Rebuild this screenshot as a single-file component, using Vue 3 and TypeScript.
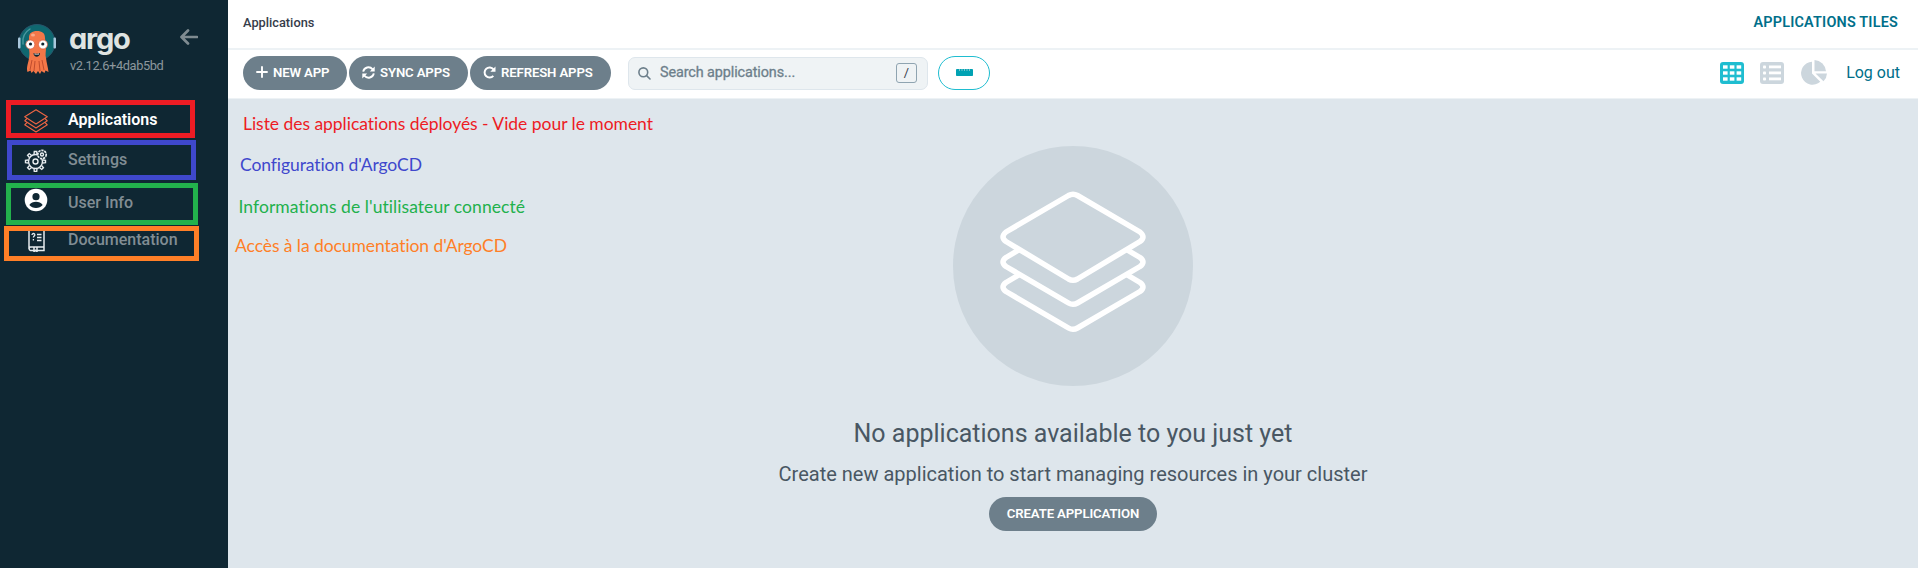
<script setup lang="ts">
interface NavItem {
  id: 'apps' | 'settings' | 'user' | 'docs'
  label: string
}
interface Frame {
  x: number
  y: number
  w: number
  h: number
  color: string
}
interface Note {
  x: number
  y: number
  len: number
  color: string
  text: string
}

const navItems: NavItem[] = [
  { id: 'apps', label: 'Applications' },
  { id: 'settings', label: 'Settings' },
  { id: 'user', label: 'User Info' },
  { id: 'docs', label: 'Documentation' },
]

const frames: Frame[] = [
  { x: 6, y: 100, w: 189, h: 38, color: '#ed1c24' },
  { x: 7, y: 140, w: 189, h: 40, color: '#3f48cc' },
  { x: 6, y: 183, w: 192, h: 42, color: '#22b14c' },
  { x: 4, y: 226, w: 195, h: 35, color: '#ff7f27' },
]

const notes: Note[] = [
  { x: 243, y: 130, len: 410, color: '#ed1c24', text: 'Liste des applications déployés - Vide pour le moment' },
  { x: 240, y: 171, len: 182, color: '#3f48cc', text: "Configuration d'ArgoCD" },
  { x: 238.5, y: 213, len: 286.5, color: '#22b14c', text: "Informations de l'utilisateur connecté" },
  { x: 235, y: 252, len: 272, color: '#ff7f27', text: "Accès à la documentation d'ArgoCD" },
]

const teeth = [0, 45, 90, 135, 180, 225, 270, 315]
</script>

<template>
  <div class="page">
    <aside class="sidebar">
      <div class="brand">
        <svg class="mascot" width="40" height="52" viewBox="0 0 40 52">
          <circle cx="20" cy="19.500" r="18" fill="#0f6870" stroke="#28556b" stroke-width="1" />
          <path d="M6 21C5 14 8 9 13 6" fill="none" stroke="#4b9aa0" stroke-width="1.4" stroke-linecap="round" />
          <rect x="1" y="14.500" width="2.500" height="11" rx="1" fill="#a9c7dc" />
          <rect x="36.500" y="14.500" width="2.500" height="11" rx="1" fill="#a9c7dc" />
          <path
            d="M12 15C12 10 15 8 20 8s8 2 8 7l1 9c0 5-1 8 0 11 .5 5 2 9 2.500 14l-3-1.500-1 2.500-3-2-1.500 3-2-3-2 3-2.500-3-2 2-1-2.500-3 1.500C9 44 11.500 40 12 35c1-5 0-7 0-11z"
            fill="#f47748"
          />
          <path d="M15 37l-2 10M18 38l-1 10M22 38l1 10M25 37l2 10" stroke="#b9472a" stroke-width=".9" />
          <ellipse cx="16" cy="12" rx="2" ry="1.500" fill="#fba988" />
          <circle cx="13.300" cy="21.500" r="4.500" fill="#fff" stroke="#d8583a" stroke-width=".7" />
          <circle cx="26" cy="21.500" r="4.500" fill="#fff" stroke="#d8583a" stroke-width=".7" />
          <circle cx="13.500" cy="21" r="1.600" fill="#10242e" />
          <circle cx="25.800" cy="21" r="1.600" fill="#10242e" />
          <path d="M16.500 30c2 1 4.500 1 6.500 0 0 5-6.500 5-6.500 0z" fill="#10242e" />
          <path d="M17.500 30.500c1.500.6 3.500.6 4.500 0v1h-4.500z" fill="#fff" />
        </svg>
        <div class="brand-text">
          <span class="wordmark">argo</span>
          <span class="version">v2.12.6+4dab5bd</span>
        </div>
        <svg class="back" width="18" height="16" viewBox="0 0 18 16">
          <path d="M8 1.500L1.500 8 8 14.500M2 8h15" fill="none" stroke="#7f8b91" stroke-width="2.700" stroke-linecap="round" stroke-linejoin="round" />
        </svg>
      </div>
      <nav class="nav">
        <a v-for="item in navItems" :key="item.id" class="nav-item" :class="item.id">
          <svg v-if="item.id === 'apps'" width="24" height="24" viewBox="0 0 24 24" fill="none" stroke="#ee6644" stroke-width="1.100" stroke-linejoin="round">
            <path d="M12 .8l11.300 7L12 15 .7 7.800z" />
            <path d="M3 9.500L.7 11.800 12 19l11.300-7.200L21 9.500" />
            <path d="M3 13.500L.7 15.800 12 23l11.300-7.200-2.300-2.300" />
          </svg>
          <svg v-else-if="item.id === 'settings'" width="24" height="24" viewBox="0 0 24 24" fill="none" stroke="#e8edf0" stroke-width="1.400">
            <circle cx="11.500" cy="13.500" r="7" />
            <circle cx="11.500" cy="13.500" r="2.500" />
            <path v-for="a in teeth" :key="a" d="M10 6.500l.3-3h2.400l.3 3" :transform="`rotate(${a} 11.500 13.500)`" />
            <circle cx="18" cy="6.500" r="4.200" fill="#0f2733" stroke-width="1.700" stroke-dasharray="2.300 .8" />
            <circle cx="18" cy="6.500" r="1.500" />
          </svg>
          <svg v-else-if="item.id === 'user'" width="24" height="24" viewBox="0 0 24 24">
            <circle cx="12" cy="12" r="11.300" fill="#fff" />
            <circle cx="12" cy="8.700" r="3.600" fill="#0f2733" />
            <path d="M5.300 17c1.500-2.300 4-3.300 6.700-3.300s5.200 1 6.700 3.300c-1.700 2-4 3-6.700 3s-5-1-6.700-3z" fill="#0f2733" />
          </svg>
          <svg v-else width="24" height="24" viewBox="0 0 24 24" fill="none" stroke="#e8edf0" stroke-width="1.500">
            <path d="M5 21V2h15v17H6.500a1.800 1.800 0 0 0 0 3.500H20V19" />
            <path d="M13 6.500h4.500M13 9.500h4.500M13 12.500h4.500" />
            <path d="M8 7c0-2 3-2 2.800 0-.2 1-1.400 1-1.400 2.500M9.400 11v1.500" stroke-width="1.300" />
            <path d="M10 19v4.500l1.500-1 1.500 1V19" />
          </svg>
          <span>{{ item.label }}</span>
        </a>
      </nav>
    </aside>

    <main class="main">
      <header class="topbar">
        <span class="crumb">Applications</span>
        <span class="view-title">APPLICATIONS TILES</span>
      </header>

      <section class="toolbar">
        <button class="btn new">
          <svg width="12" height="12" viewBox="0 0 12 12"><path d="M6 1v10M1 6h10" stroke="#fff" stroke-width="1.900" stroke-linecap="round" /></svg>
          <span>NEW APP</span>
        </button>
        <button class="btn sync">
          <svg width="13" height="13" viewBox="0 0 13 13" fill="none" stroke="#fff" stroke-width="1.900">
            <path d="M1.200 5.700C2 1.200 7.500-.2 10.700 3.300M11.800 7.300C11 11.800 5.500 13.200 2.300 9.700" />
            <path d="M12.700.6v4.900H7.800zM.3 12.400V7.500h4.900z" fill="#fff" stroke="none" />
          </svg>
          <span>SYNC APPS</span>
        </button>
        <button class="btn refresh">
          <svg width="13" height="13" viewBox="0 0 13 13" fill="none" stroke="#fff" stroke-width="2">
            <path d="M10.500 3.400A5 5 0 1 0 10.300 9.900" />
            <path d="M12.500.5v5.200H7.300z" fill="#fff" stroke="none" />
          </svg>
          <span>REFRESH APPS</span>
        </button>
        <div class="search">
          <svg width="13" height="13" viewBox="0 0 13 13" fill="none" stroke="#6d7f8b" stroke-width="1.600" stroke-linecap="round">
            <circle cx="5.300" cy="5.300" r="4.400" />
            <path d="M8.600 8.600L12 12" />
          </svg>
          <span class="placeholder">Search applications...</span>
          <kbd class="key">/</kbd>
        </div>
        <div class="health">
          <svg width="17" height="7" viewBox="0 0 17 7">
            <rect width="17" height="7" rx=".8" fill="#00a2b3" />
            <path d="M3.500 0v2M6 0v2M8.500 0v2M11 0v2M13.500 0v2" stroke="#7cc6cd" stroke-width="1" />
          </svg>
        </div>
        <div class="views">
          <svg width="24" height="22" viewBox="0 0 24 22">
            <rect width="24" height="22" rx="3" fill="#1fbdd0" />
            <g fill="#fff">
              <template v-for="r in 3" :key="r">
                <rect v-for="c in 3" :key="c" :x="3 + (c - 1) * 6.8" :y="3.300 + (r - 1) * 6" width="4.600" height="3.400" />
              </template>
            </g>
          </svg>
          <svg width="24" height="22" viewBox="0 0 24 22">
            <rect width="24" height="22" rx="3" fill="#ccd6dd" />
            <g fill="#fff">
              <template v-for="r in 3" :key="r">
                <rect x="3" :y="3.500 + (r - 1) * 6" width="3" height="3" rx=".8" />
                <rect x="9" :y="3.500 + (r - 1) * 6" width="12" height="2.800" />
              </template>
            </g>
          </svg>
          <svg class="pie" width="26" height="25" viewBox="0 0 26 25" fill="#ccd6dd">
            <path d="M11 1.700V13.500l8.300 8.200A11.500 11.500 0 1 1 11 1.700z" />
            <path d="M13.500 0A12 12 0 0 1 25 11.200H13.500z" />
            <path d="M14.500 13.500H26a12 12 0 0 1-3.500 7.800z" />
          </svg>
          <a class="logout">Log out</a>
        </div>
      </section>

      <section class="empty">
        <svg class="empty-icon" width="240" height="240" viewBox="0 0 240 240">
          <circle cx="120" cy="120" r="120" fill="#ccd6dd" />
          <g fill="none" stroke="#fff" stroke-width="5.500" stroke-linejoin="round">
            <path d="M115.500 49.500Q120 47 124.500 49.500L187 86Q193 91 187 95.500L124.500 133Q120 135.500 115.500 133L53 95.500Q47 91 53 86Z" />
            <path d="M66.500 103.500L53 111.500Q47 116 53 120.500L115.500 157Q120 159.500 124.500 157L187 120.500Q193 116 187 111.500L173.500 103.500" />
            <path d="M66.500 128.500L53 136.500Q47 141 53 145.500L115.500 182Q120 184.500 124.500 182L187 145.500Q193 141 187 136.500L173.500 128.500" />
          </g>
        </svg>
        <h4 class="empty-title">No applications available to you just yet</h4>
        <h5 class="empty-sub">Create new application to start managing resources in your cluster</h5>
        <button class="btn create"><span>CREATE APPLICATION</span></button>
      </section>
    </main>

    <svg class="annotations" width="1918" height="568" viewBox="0 0 1918 568">
      <rect
        v-for="f in frames"
        :key="f.color"
        :x="f.x + 2.5"
        :y="f.y + 2.5"
        :width="f.w - 5"
        :height="f.h - 5"
        :stroke="f.color"
        fill="none"
        stroke-width="5"
      />
      <text v-for="n in notes" :key="n.text" :x="n.x" :y="n.y" :fill="n.color" :textLength="n.len">{{ n.text }}</text>
    </svg>
  </div>
</template>

<style>
html,
body {
  margin: 0;
  overflow: hidden;
}
</style>

<style scoped>
.page {
  position: relative;
  display: flex;
  width: 1918px;
  height: 568px;
  font-family: Roboto, 'Liberation Sans', sans-serif;
  background: #dee6ec;
}
.sidebar {
  width: 228px;
  flex: none;
  background: #0f2733;
}
.brand {
  display: flex;
  height: 98px;
  box-sizing: border-box;
  padding: 23px 0 0 17px;
}
.brand-text {
  display: flex;
  flex-direction: column;
  width: 110px;
  margin-left: 13px;
}
.wordmark {
  margin: -4px 0 -1px -1px;
  font: 700 29px/40px Inter, Roboto, sans-serif;
  font-feature-settings: 'cv11' 1;
  letter-spacing: -1.2px;
  color: #dfe4e2;
}
.version {
  font-size: 12.8px;
  letter-spacing: -0.38px;
  line-height: 15px;
  color: #8c979d;
}
.back {
  margin-top: 6px;
}
.nav {
  display: flex;
  flex-direction: column;
}
.nav-item {
  display: flex;
  align-items: center;
  gap: 20px;
  padding-left: 24px;
  height: 42px;
  font-size: 16px;
  font-weight: 500;
  color: #818d94;
}
.nav-item.apps {
  color: #fff;
  font-weight: 600;
}
.nav-item.apps svg {
  margin-top: 3px;
}
.nav-item.settings {
  height: 40px;
}
.nav-item.settings span,
.nav-item.docs span {
  margin-top: -2px;
}
.nav-item.user {
  height: 44px;
}
.nav-item.user svg {
  margin-top: -5px;
}
.nav-item.docs {
  height: 32px;
}
.main {
  display: flex;
  flex-direction: column;
  flex: 1;
}
.topbar {
  display: flex;
  justify-content: space-between;
  box-sizing: border-box;
  height: 50px;
  padding: 14px 20px 0 15px;
  background: #fff;
  border-bottom: 2px solid #edf2f5;
}
.crumb {
  font-size: 12.8px;
  font-weight: 500;
  line-height: 18px;
  color: #363c4a;
}
.view-title {
  font-size: 14.4px;
  font-weight: 600;
  letter-spacing: 0.2px;
  line-height: 18px;
  color: #006f8a;
}
.toolbar {
  display: flex;
  align-items: flex-start;
  box-sizing: border-box;
  height: 49px;
  padding: 6px 18px 0 15px;
  background: #fff;
  border-bottom: 1px solid #edf2f5;
}
.btn {
  display: flex;
  align-items: center;
  gap: 5px;
  box-sizing: border-box;
  height: 34px;
  margin: 0 2px 0 0;
  padding: 0 0 2px 13px;
  border: 0;
  border-radius: 17px;
  background: #6d7f8b;
  color: #fff;
  font-family: inherit;
  font-size: 13.2px;
  font-weight: 600;
  letter-spacing: -0.14px;
  white-space: nowrap;
}
.new {
  width: 104px;
}
.sync {
  width: 119px;
}
.refresh {
  width: 141px;
}
.search {
  display: flex;
  align-items: center;
  box-sizing: border-box;
  width: 300px;
  height: 33px;
  margin: 1px 10px 0 15px;
  padding: 0 10px 1px 9px;
  border: 1px solid #dee6ec;
  border-radius: 7px;
  background: #eff3f5;
}
.placeholder {
  flex: 1;
  margin: -1px 0 0 9px;
  font-size: 14.4px;
  letter-spacing: -0.1px;
  color: #6d7f8b;
  -webkit-text-stroke: 0.3px #6d7f8b;
}
.key {
  box-sizing: border-box;
  width: 21px;
  height: 20px;
  border: 1px solid #8fa4b1;
  border-radius: 3px;
  font: 12.8px/18px Roboto, sans-serif;
  text-align: center;
  color: #363c4a;
}
.health {
  display: flex;
  align-items: center;
  justify-content: center;
  box-sizing: border-box;
  width: 52px;
  height: 34px;
  border: 1px solid #1fbdd0;
  border-radius: 17px;
}
.health svg {
  margin-top: -2px;
}
.views {
  display: flex;
  align-items: center;
  gap: 16px;
  height: 34px;
  margin-left: auto;
}
.pie {
  margin: -1px -1px 0 1px;
}
.logout {
  margin: -2px 0 0 4px;
  font-size: 16px;
  color: #006f8a;
}
.empty {
  display: flex;
  flex-direction: column;
  align-items: center;
  padding-top: 47px;
}
.empty-icon {
  flex: none;
}
.empty-title {
  margin: 33px 0 0;
  font-size: 25px;
  font-weight: 400;
  line-height: 30px;
  color: #495763;
}
.empty-sub {
  margin: 13px 0 0;
  font-size: 20px;
  font-weight: 400;
  line-height: 24px;
  color: #495763;
}
.create {
  justify-content: center;
  width: 168px;
  margin: 11px 0 0;
  padding: 0 0 2px;
}
.annotations {
  position: absolute;
  inset: 0;
  pointer-events: none;
}
.annotations text {
  font: 400 17.5px Lato, 'Open Sans', sans-serif;
  font-variant-ligatures: none;
}
</style>
